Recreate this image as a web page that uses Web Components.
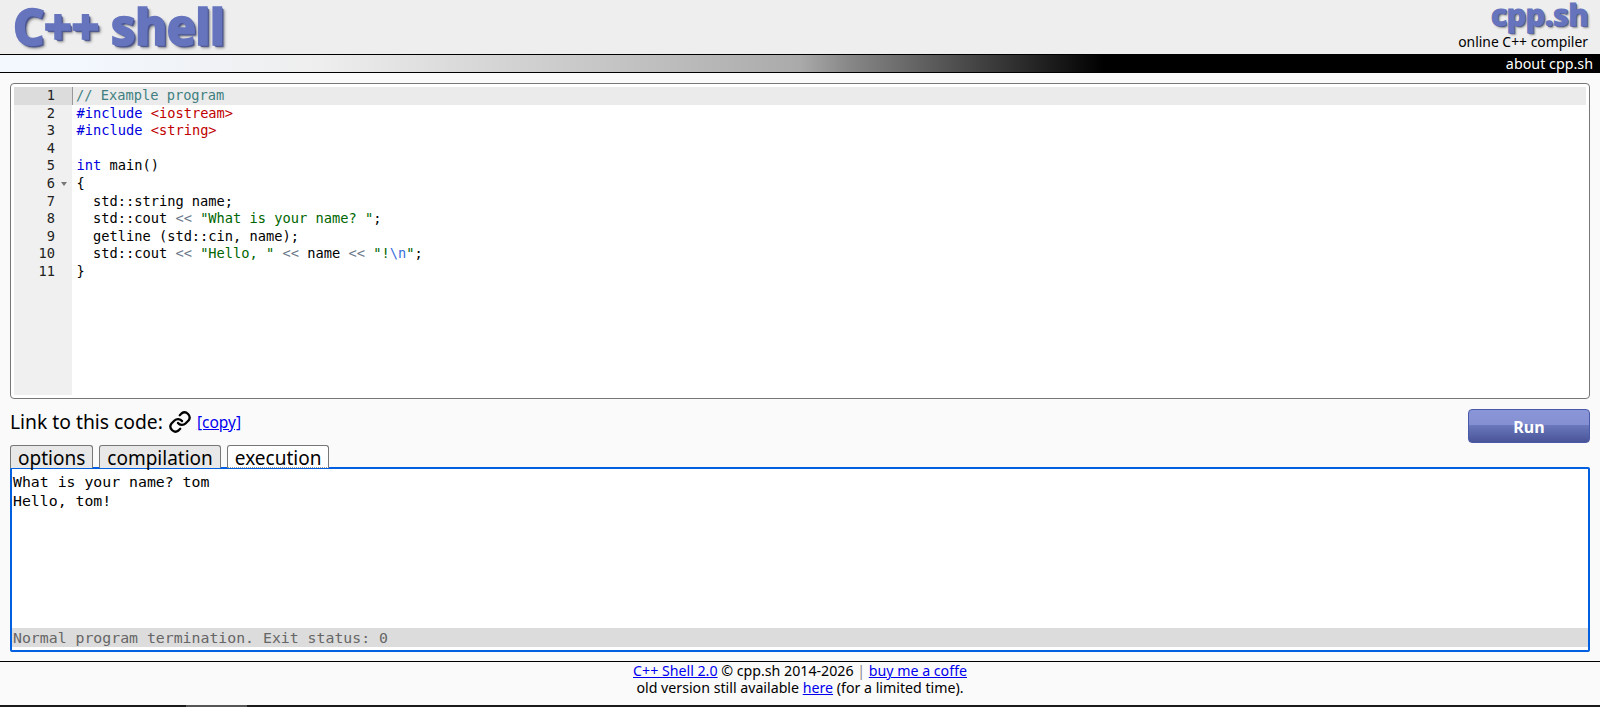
<!DOCTYPE html>
<html><head><meta charset="utf-8"><style>
html,body{margin:0;padding:0;height:707px;overflow:hidden;background:#fafafa}
body{font-family:"Noto Sans",sans-serif;color:#000;display:flex;flex-direction:column}
</style></head><body>
<cpp-header></cpp-header>
<cpp-main>
<cpp-editor></cpp-editor>
<cpp-actions></cpp-actions>
<cpp-tabs></cpp-tabs>
<cpp-output></cpp-output>
</cpp-main>
<cpp-footer></cpp-footer>
<script>
function def(name,html){customElements.define(name,class extends HTMLElement{constructor(){super();this.attachShadow({mode:'open'}).innerHTML=html}})}
const UI='"Noto Sans",sans-serif', MONO='"DejaVu Sans Mono",monospace';
def('cpp-header',`<style>
:host{display:block;flex:none}
.top{height:54px;background:#eee;border-bottom:1px solid #000;display:flex;justify-content:space-between;padding:0 12px 0 13px}
.logo{font:800 49px/53px ${UI};color:#6574bd;text-shadow:1px 1px 0 #4a5590,2px 2px 1px #4a5590,3px 3px 3px #888;-webkit-text-stroke:1.5px #6574bd;letter-spacing:-.8px;white-space:pre}
.r{display:flex;flex-direction:column;align-items:flex-end}
.s{font:800 31px/29px ${UI};color:#6574bd;text-shadow:1px 1px 0 #4a5590,2px 2px 2px #888;-webkit-text-stroke:1px #6574bd;letter-spacing:-.6px}
.o{font:13.9px/19px ${UI};margin-top:3px}
.bar{height:17px;background:linear-gradient(90deg,#f3f8ff 0,#f3f8ff 4%,#eee 20%,#aaa 50%,#888 53%,#333 63%,#000 69%);border-bottom:1px solid #000;display:flex;justify-content:flex-end;align-items:center;padding-right:7px}
.bar span{font:14.3px/17px ${UI};color:#fff}
</style><div class="top"><div class="logo">C++ shell</div><div class="r"><div class="s">cpp.sh</div><div class="o">online C++ compiler</div></div></div><div class="bar"><span>about cpp.sh</span></div>`);
def('cpp-main',`<style>:host{display:flex;flex-direction:column;flex:1;padding:10px 10px 0;min-height:0}</style><slot></slot>`);
const code=[
'<i class=c>// Example program</i>',
'<i class=k>#include</i> <i class=r>&lt;iostream&gt;</i>',
'<i class=k>#include</i> <i class=r>&lt;string&gt;</i>',
'',
'<i class=k>int</i> main()',
'{',
'  std::string name;',
'  std::cout <i class=o>&lt;&lt;</i> <i class=s>"What is your name? "</i>;',
'  getline (std::cin, name);',
'  std::cout <i class=o>&lt;&lt;</i> <i class=s>"Hello, "</i> <i class=o>&lt;&lt;</i> name <i class=o>&lt;&lt;</i> <i class=s>"!<i class=e>\\n</i>"</i>;',
'}'];
def('cpp-editor',`<style>
:host{display:block;flex:none;height:316px;box-sizing:border-box;border:1px solid #777;border-radius:4px;background:#fff;padding:3px;font:13.7px/17.6px ${MONO}}
.w{display:grid;grid-template-columns:58px 1fr;height:100%;overflow:hidden}
.g{background:#f0f0f0;text-align:right;color:#222}
.n{height:17.6px;padding-right:17px;position:relative}
.n.a{background:#dcdcdc}
.t{position:absolute;right:5px;top:7px;width:0;height:0;border:3.5px solid transparent;border-top:4px solid #777;border-bottom:0}
.l{height:17.6px;padding-left:4.5px;white-space:pre;box-sizing:border-box;color:#000}
.l.a{background:#ebebeb;border-left:1.5px solid #999;padding-left:3px}
i{font-style:normal}.c{color:#3f7f7f}.k{color:#00d}.r{color:#c00000}.o{color:#687687}.s{color:#060}.e{color:#3a6fe0}
</style><div class="w"><div class="g">${code.map((c,i)=>`<div class="n ${i==0?'a':''}">${i+1}${i==5?'<span class=t></span>':''}</div>`).join('')}</div><div>${code.map((c,i)=>`<div class="l ${i==0?'a':''}">${c}</div>`).join('')}</div></div>`);
def('cpp-actions',`<style>
:host{display:flex;flex:none;justify-content:space-between;align-items:flex-start;height:46px;padding-top:10px;box-sizing:border-box}
.lk{font:19.3px/26px ${UI};display:flex;align-items:center}
svg{margin:0 5px 0 5px}
a{font-size:15.5px;color:#00e;text-decoration:underline}
button{width:122px;height:34px;border:1px solid #4a5aa8;border-radius:4px;color:#fff;font:bold 16px "Noto Sans",sans-serif;background:linear-gradient(#8a96d8 0,#8490d2 46%,#6a78bc 47%,#4a5598 100%);padding:1px 0 0}
</style><div class="lk">Link to this code:<svg width="24" height="24" viewBox="0 0 24 24" fill="none" stroke="#000" stroke-width="2.3" stroke-linecap="round" stroke-linejoin="round"><path d="M10 13a5 5 0 0 0 7.5.5l3-3a5 5 0 0 0-7-7l-1.7 1.7"/><path d="M14 11a5 5 0 0 0-7.5-.5l-3 3a5 5 0 0 0 7 7l1.7-1.7"/></svg><a>[copy]</a></div><button>Run</button>`);
def('cpp-tabs',`<style>
:host{display:flex;flex:none;gap:6px;height:23px;position:relative;z-index:1;margin-bottom:-1px}
div{font:19px/25px ${UI};border:1px solid #777;border-bottom:0;border-radius:3px 3px 0 0;background:#e8e8e8;padding:0 7px;height:23px;box-sizing:border-box}
.a{background:#fff;border-bottom:1px dotted #999}
</style><div>options</div><div>compilation</div><div class="a">execution</div>`);
def('cpp-output',`<style>
:host{display:flex;flex-direction:column;flex:none;height:185px;box-sizing:border-box;border:2px solid #0060df;border-radius:2px;background:#fff;font:14.83px/18.5px ${MONO}}
.o{flex:1;padding:4px 1px;white-space:pre}
.s{height:19px;background:#dcdcdc;color:#666;padding:0 1px;line-height:19px;margin:0 0 3px 0;white-space:pre}
</style><div class="o">What is your name? tom
Hello, tom!</div><div class="s">Normal program termination. Exit status: 0</div>`);
def('cpp-footer',`<style>
:host{display:block;flex:none;height:46px;margin-top:10px;border-top:1px solid #000;position:relative;text-align:center;font:14.2px/17.3px ${UI};box-sizing:border-box}
a{color:#00e;text-decoration:underline}
.b{position:absolute;left:0;right:0;bottom:0;height:2px;background:#1a1a1a}
.b i{position:absolute;left:186px;width:61px;top:0;height:2px;background:#555}
</style><div><a>C++ Shell 2.0</a> © cpp.sh 2014-2026 <span style="color:#888">|</span> <a>buy me a coffe</a></div><div>old version still available <a>here</a> (for a limited time).</div><div class="b"><i></i></div>`);
</script></body></html>
